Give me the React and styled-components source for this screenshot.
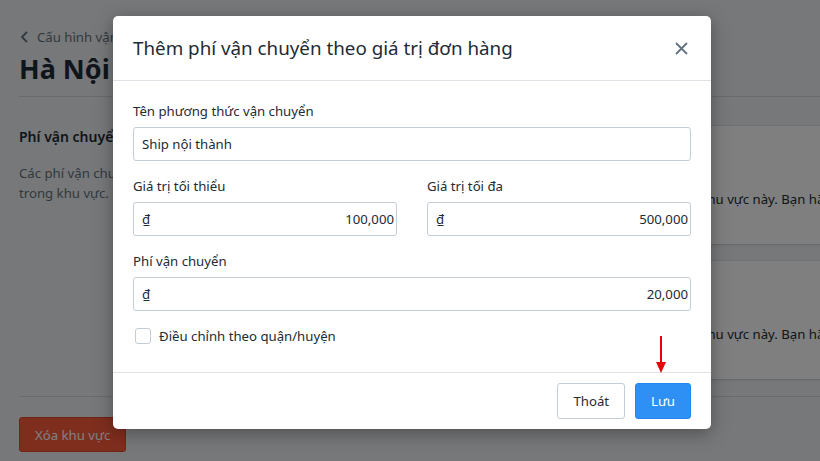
import styled, { createGlobalStyle } from "styled-components";

const GlobalStyle = createGlobalStyle`
  html, body {
    margin: 0;
    padding: 0;
    background: #eef0f2;
    font-family: "Noto Sans", "Open Sans", sans-serif;
    overflow: hidden;
  }
  * { box-sizing: border-box; }
`;

const Page = styled.div`
  position: relative;
  width: 820px;
  height: 461px;
  overflow: hidden;
  padding: 26px 0 0 19px;
`;

const BackLink = styled.div`
  display: flex;
  align-items: center;
  gap: 6px;
  font-size: 13.2px;
  color: #637381;
  height: 22px;
`;

const PageTitle = styled.h1`
  margin: 4px 0 0;
  font-size: 27px;
  font-weight: 700;
  color: #212b36;
  line-height: 34px;
`;

const Divider = styled.hr`
  width: 1100px;
  border: none;
  border-top: 1px solid #d3d8dd;
  margin: ${(p) => p.$m || "10px 0 0"};
`;

const Section = styled.div`
  display: flex;
  gap: 24px;
  width: 1100px;
  margin-top: 29px;
`;

const SideInfo = styled.div`
  width: 260px;
  flex-shrink: 0;
`;

const SideTitle = styled.div`
  font-size: 14px;
  font-weight: 600;
  color: #212b36;
  line-height: 22px;
`;

const SideText = styled.div`
  margin-top: 15px;
  font-size: 13.2px;
  line-height: 20px;
  color: #637381;
`;

const Cards = styled.div`
  display: flex;
  flex-direction: column;
  gap: 17px;
  flex: 1;
`;

const Card = styled.div`
  background: #fff;
  height: 118px;
  border-radius: 3px;
  box-shadow: 0 0 0 1px rgba(63, 63, 68, 0.05), 0 1px 3px rgba(63, 63, 68, 0.15);
  padding: 63px 0 0 135px;
  font-size: 13.2px;
  line-height: 20px;
  color: #212b36;
  white-space: nowrap;
`;

const DeleteButton = styled.button`
  margin-top: 20px;
  height: 35px;
  padding: 0 15px;
  background: #ff5c3c;
  color: #fff;
  border: 1px solid #e04a2c;
  border-radius: 3px;
  font-family: inherit;
  font-size: 13.2px;
`;

const Overlay = styled.div`
  position: absolute;
  inset: 0;
  background: rgba(0, 0, 0, 0.5);
`;

const Modal = styled.div`
  position: absolute;
  left: 113px;
  top: 16px;
  width: 598px;
  height: 413px;
  background: #fff;
  border-radius: 5px;
  box-shadow: 0 4px 18px rgba(0, 0, 0, 0.35);
  display: flex;
  flex-direction: column;
`;

const ModalHeader = styled.div`
  height: 65px;
  display: flex;
  align-items: center;
  justify-content: space-between;
  padding: 0 23px 0 20px;
  border-bottom: 1px solid #dfe3e8;
`;

const ModalTitle = styled.h2`
  margin: 0;
  font-size: 18.8px;
  font-weight: 400;
  color: #212b36;
`;

const CloseButton = styled.button`
  background: none;
  border: none;
  padding: 0;
  display: flex;
  cursor: pointer;
`;

const ModalBody = styled.div`
  flex: 1;
  padding: 20px 20px 0;
  display: flex;
  flex-direction: column;
  gap: 15px;
`;

const Row = styled.div`
  display: grid;
  grid-template-columns: 1fr 1fr;
  gap: 30px;
`;

const Field = styled.div`
  display: flex;
  flex-direction: column;
  gap: 6px;
`;

const Label = styled.label`
  font-size: 13.2px;
  color: #212b36;
  line-height: 20px;
`;

const InputBox = styled.div`
  height: 34px;
  border: 1px solid #c4cdd5;
  border-radius: 3px;
  display: flex;
  align-items: center;
  justify-content: space-between;
  padding: 0 2px 0 8px;
  font-size: 13.2px;
  color: #212b36;
`;

const Currency = styled.span`
  font-size: 13.2px;
`;

const CheckRow = styled.label`
  display: flex;
  align-items: center;
  gap: 8px;
  padding-left: 2px;
  line-height: 20px;
  font-size: 13.2px;
  color: #212b36;
`;

const CheckBox = styled.span`
  width: 16px;
  height: 16px;
  border: 1px solid #c4cdd5;
  border-radius: 3px;
  background: #fff;
`;

const ModalFooter = styled.div`
  height: 57px;
  border-top: 1px solid #dfe3e8;
  display: flex;
  align-items: center;
  justify-content: flex-end;
  gap: 10px;
  padding: 0 20px;
`;

const Button = styled.button`
  height: 36px;
  padding: 0 15px;
  border-radius: 3px;
  font-family: inherit;
  font-size: 13.2px;
  border: 1px solid ${(p) => (p.$primary ? "#2487f0" : "#c4cdd5")};
  background: ${(p) => (p.$primary ? "#2e90f5" : "#fff")};
  color: ${(p) => (p.$primary ? "#fff" : "#212b36")};
`;

const Arrow = styled.svg`
  position: absolute;
  left: 542px;
  top: 320px;
`;

export default function App() {
  return (
    <>
      <GlobalStyle />
      <Page>
        <BackLink>
          <svg width="12" height="12" viewBox="0 0 12 12">
            <path d="M8 1 L3 6 L8 11" fill="none" stroke="#637381" strokeWidth="1.8" />
          </svg>
          Cấu hình vận chuyển
        </BackLink>
        <PageTitle>Hà Nội</PageTitle>
        <Divider />
        <Section>
          <SideInfo>
            <SideTitle>Phí vận chuyển</SideTitle>
            <SideText>
              Các phí vận chuyển được áp dụng
              <br />
              trong khu vực.
            </SideText>
          </SideInfo>
          <Cards>
            <Card>Chưa có phí vận chuyển nào được tạo cho khu vực này. Bạn hãy thêm phí vận chuyển.</Card>
            <Card>Chưa có phí vận chuyển nào được tạo cho khu vực này. Bạn hãy thêm phí vận chuyển.</Card>
          </Cards>
        </Section>
        <Divider $m="17px 0 0" />
        <DeleteButton>Xóa khu vực</DeleteButton>

        <Overlay />
        <Modal>
          <ModalHeader>
            <ModalTitle>Thêm phí vận chuyển theo giá trị đơn hàng</ModalTitle>
            <CloseButton aria-label="Đóng">
              <svg width="13" height="13" viewBox="0 0 13 13">
                <path d="M1 1 L12 12 M12 1 L1 12" stroke="#637381" strokeWidth="1.8" />
              </svg>
            </CloseButton>
          </ModalHeader>
          <ModalBody>
            <Field>
              <Label>Tên phương thức vận chuyển</Label>
              <InputBox>Ship nội thành</InputBox>
            </Field>
            <Row>
              <Field>
                <Label>Giá trị tối thiểu</Label>
                <InputBox>
                  <Currency>₫</Currency>
                  100,000
                </InputBox>
              </Field>
              <Field>
                <Label>Giá trị tối đa</Label>
                <InputBox>
                  <Currency>₫</Currency>
                  500,000
                </InputBox>
              </Field>
            </Row>
            <Field>
              <Label>Phí vận chuyển</Label>
              <InputBox>
                <Currency>₫</Currency>
                20,000
              </InputBox>
            </Field>
            <CheckRow>
              <CheckBox />
              Điều chỉnh theo quận/huyện
            </CheckRow>
          </ModalBody>
          <ModalFooter>
            <Button>Thoát</Button>
            <Button $primary>Lưu</Button>
          </ModalFooter>
          <Arrow width="12" height="38" viewBox="0 0 12 38">
            <path d="M6 0 V28" stroke="#e5060b" strokeWidth="2" />
            <path d="M1 26 L6 37 L11 26 Z" fill="#e5060b" />
          </Arrow>
        </Modal>
      </Page>
    </>
  );
}
